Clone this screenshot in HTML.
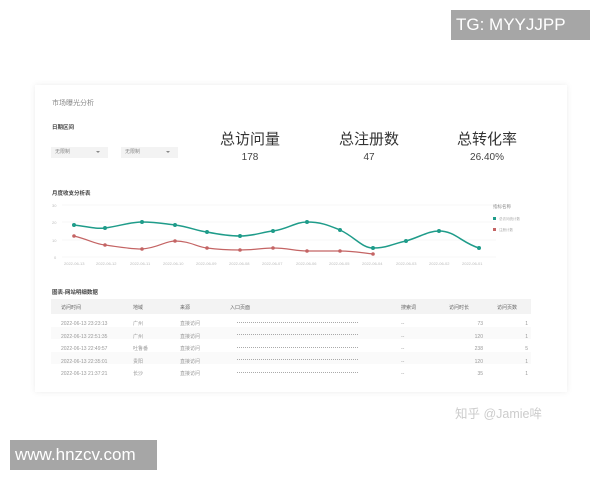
<!DOCTYPE html>
<html><head><meta charset="utf-8"><style>
body{margin:0;width:600px;height:480px;background:#fff;position:relative;overflow:hidden;font-family:"Liberation Sans","Noto Sans CJK SC",sans-serif;}
.a{position:absolute;white-space:nowrap;}
.card{position:absolute;left:35px;top:85px;width:532px;height:307px;background:#fff;box-shadow:0 0 6px rgba(0,0,0,.08);}
.s{font-size:5px;color:#999;}
.dd{position:absolute;top:147px;width:57px;height:11px;background:#f3f3f3;font-size:5px;color:#888;line-height:11px;padding-left:4px;box-sizing:border-box;}
.dd:after{content:"";position:absolute;right:8px;top:4px;border:2.5px solid transparent;border-top-color:#888;}
.big{font-size:15px;color:#333;transform:translateX(-50%);}
.num{font-size:10px;color:#444;transform:translateX(-50%);}
.dots{position:absolute;left:237px;width:121px;height:0;border-top:1px dotted #aaa;}
</style></head><body>
<div class="card"></div>
<div class="a" style="left:52px;top:98px;font-size:7px;color:#888">市场曝光分析</div>
<div class="a" style="left:52px;top:123px;font-size:5.5px;color:#444;font-weight:bold">日期区间</div>
<div class="dd" style="left:51px">无限制</div>
<div class="dd" style="left:121px">无限制</div>
<div class="a big" style="left:250px;top:128px">总访问量</div>
<div class="a big" style="left:369px;top:128px">总注册数</div>
<div class="a big" style="left:487px;top:128px">总转化率</div>
<div class="a num" style="left:250px;top:152px">178</div>
<div class="a num" style="left:369px;top:152px">47</div>
<div class="a num" style="left:487px;top:152px">26.40%</div>
<div class="a" style="left:52px;top:189px;font-size:5.5px;color:#444;font-weight:bold">月度收支分析表</div>
<svg class="a" style="left:0;top:0" width="600" height="480">
<g stroke="#f0f0f0" stroke-width="0.6"><line x1="62" y1="205" x2="496" y2="205"/><line x1="62" y1="222" x2="496" y2="222"/><line x1="62" y1="240" x2="496" y2="240"/><line x1="62" y1="257" x2="496" y2="257"/></g>
<g font-size="4" fill="#bbb"><text x="52" y="207">30</text><text x="52" y="224">20</text><text x="52" y="242">10</text><text x="54" y="259">0</text>
<text x="64" y="265">2022-06-13</text><text x="96" y="265">2022-06-12</text><text x="130" y="265">2022-06-11</text><text x="163" y="265">2022-06-10</text><text x="196" y="265">2022-06-09</text><text x="229" y="265">2022-06-08</text><text x="262" y="265">2022-06-07</text><text x="296" y="265">2022-06-06</text><text x="329" y="265">2022-06-05</text><text x="362" y="265">2022-06-04</text><text x="396" y="265">2022-06-03</text><text x="429" y="265">2022-06-02</text><text x="462" y="265">2022-06-01</text></g>
<path d="M74 225 C90 227,95 229,105 228 C120 226,130 222,142 222 C158 222,165 224,175 225 C190 227,197 231,207 232 C222 235,230 236,240 236 C255 236,262 232,273 231 C288 229,295 222,307 222 C322 222,330 226,340 230 C355 237,362 248,373 248 C388 248,395 243,406 241 C420 237,428 231,439 231 C455 231,462 243,479 248" fill="none" stroke="#1f9c8a" stroke-width="1.5"/>
<path d="M74 236 C90 240,95 244,105 245 C120 247,130 249,142 249 C158 248,165 241,175 241 C190 241,197 247,207 248 C222 250,230 250,240 250 C255 250,262 248,273 248 C288 248,295 251,307 251 C322 251,330 251,340 251 C355 251,362 253,373 254" fill="none" stroke="#c46464" stroke-width="1.2"/>
<g fill="#1f9c8a"><circle cx="74" cy="225" r="2"/><circle cx="105" cy="228" r="2"/><circle cx="142" cy="222" r="2"/><circle cx="175" cy="225" r="2"/><circle cx="207" cy="232" r="2"/><circle cx="240" cy="236" r="2"/><circle cx="273" cy="231" r="2"/><circle cx="307" cy="222" r="2"/><circle cx="340" cy="230" r="2"/><circle cx="373" cy="248" r="2"/><circle cx="406" cy="241" r="2"/><circle cx="439" cy="231" r="2"/><circle cx="479" cy="248" r="2"/></g>
<g fill="#c46464"><circle cx="74" cy="236" r="1.8"/><circle cx="105" cy="245" r="1.8"/><circle cx="142" cy="249" r="1.8"/><circle cx="175" cy="241" r="1.8"/><circle cx="207" cy="248" r="1.8"/><circle cx="240" cy="250" r="1.8"/><circle cx="273" cy="248" r="1.8"/><circle cx="307" cy="251" r="1.8"/><circle cx="340" cy="251" r="1.8"/><circle cx="373" cy="254" r="1.8"/></g>
<text x="493" y="208" font-size="4.5" fill="#888">指标名称</text>
<rect x="493" y="217" width="3" height="3" fill="#1f9c8a"/><text x="499" y="220" font-size="3.5" fill="#aaa">总访问统计数</text>
<rect x="493" y="228" width="3" height="3" fill="#c46464"/><text x="499" y="231" font-size="3.5" fill="#aaa">注册计数</text>
</svg>
<div class="a" style="left:52px;top:288px;font-size:5.5px;color:#444;font-weight:bold">图表-网站明细数据</div>
<div class="a" style="left:51px;top:299px;width:480px;height:15px;background:#f3f3f3"></div>
<div class="a" style="left:51px;top:327px;width:480px;height:12px;background:#fafafa"></div>
<div class="a" style="left:51px;top:352px;width:480px;height:12px;background:#fafafa"></div>
<div class="dots" style="top:322px"></div><div class="dots" style="top:334px"></div><div class="dots" style="top:347px"></div><div class="dots" style="top:359px"></div><div class="dots" style="top:372px"></div>
<div class="a s" style="left:61px;top:304px;color:#666">访问时间</div><div class="a s" style="left:133px;top:304px;color:#666">地域</div><div class="a s" style="left:180px;top:304px;color:#666">来源</div><div class="a s" style="left:230px;top:304px;color:#666">入口页面</div><div class="a s" style="left:401px;top:304px;color:#666">搜索词</div><div class="a s" style="left:449px;top:304px;color:#666">访问时长</div><div class="a s" style="left:497px;top:304px;color:#666">访问页数</div>
<div class="a s" style="left:61px;top:318px;line-height:12.5px">2022-06-13 23:23:13<br>2022-06-13 22:51:35<br>2022-06-13 22:49:57<br>2022-06-13 22:35:01<br>2022-06-13 21:37:21</div>
<div class="a s" style="left:133px;top:318px;line-height:12.5px">广州<br>广州<br>吐鲁番<br>贵阳<br>长沙</div>
<div class="a s" style="left:180px;top:318px;line-height:12.5px">直接访问<br>直接访问<br>直接访问<br>直接访问<br>直接访问</div>
<div class="a s" style="left:401px;top:318px;line-height:12.5px">--<br>--<br>--<br>--<br>--</div>
<div class="a s" style="left:456px;top:318px;width:27px;text-align:right;line-height:12.5px">73<br>120<br>238<br>120<br>35</div>
<div class="a s" style="left:518px;top:318px;width:10px;text-align:right;line-height:12.5px">1<br>1<br>5<br>1<br>1</div>
<div class="a" style="left:455px;top:403px;font-size:12.5px;color:#ccc">知乎 @Jamie哞</div>
<div class="a" style="left:451px;top:10px;width:139px;height:30px;background:#a6a6a6;color:#fff;font-size:17px;line-height:30px;padding-left:5px;box-sizing:border-box">TG: MYYJJPP</div>
<div class="a" style="left:10px;top:440px;width:147px;height:30px;background:#a6a6a6;color:#fff;font-size:17px;line-height:30px;padding-left:5px;box-sizing:border-box">www.hnzcv.com</div>
</body></html>
